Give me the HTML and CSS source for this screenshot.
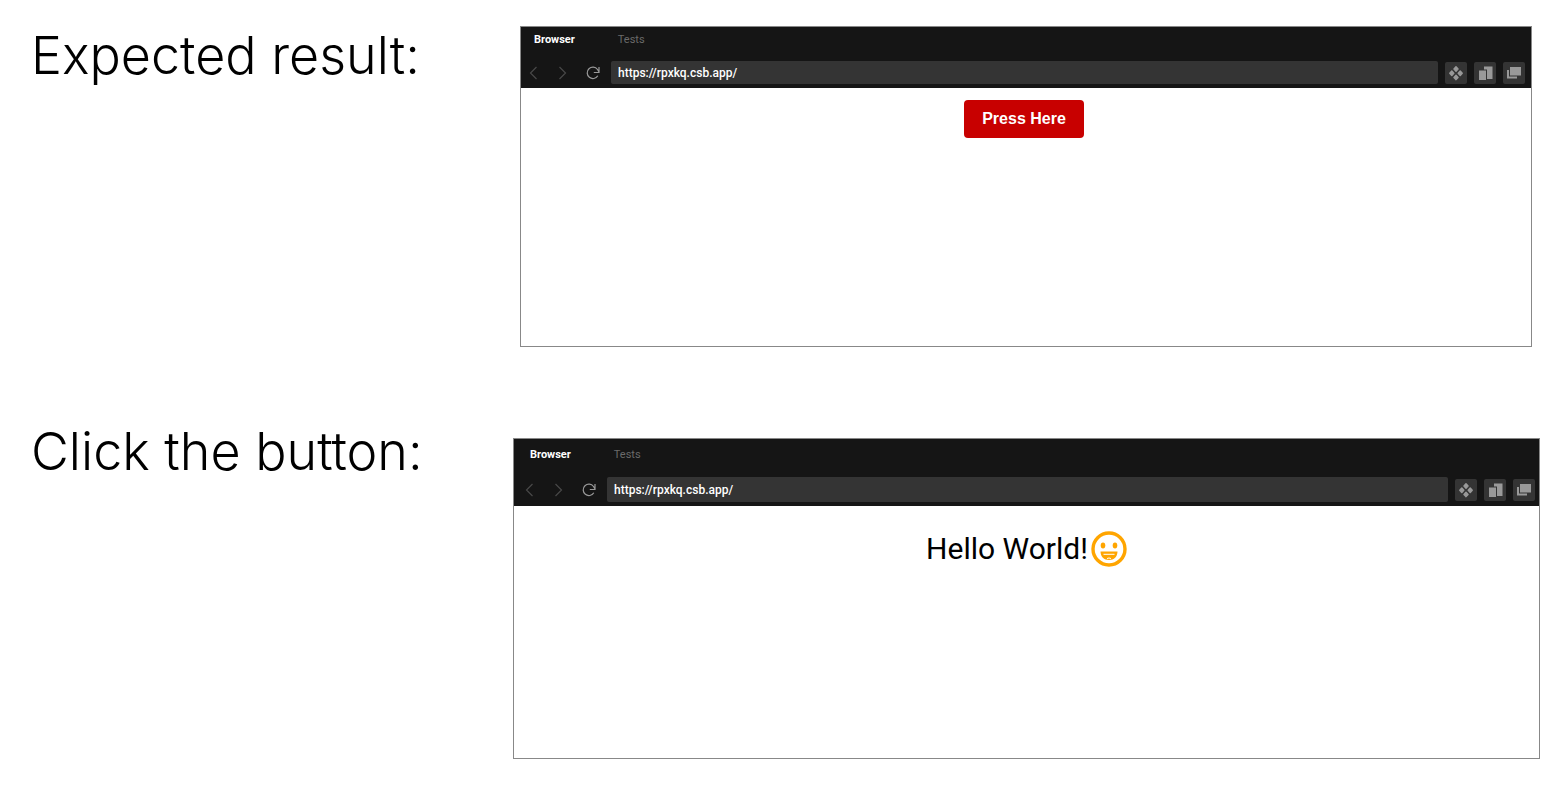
FILE: index.html
```html
<!DOCTYPE html>
<html lang="en">
<head>
<meta charset="utf-8">
<title>Expected result</title>
<link rel="stylesheet" href="styles.css">
</head>
<body>
<svg class="defs" aria-hidden="true">
  <symbol id="back" viewBox="0 0 9 14"><path d="M7.500 1 1.500 7l6 6" fill="none" stroke="currentColor" stroke-width="1.200"/></symbol>
  <symbol id="forward" viewBox="0 0 9 14"><path d="m1.500 1 6 6-6 6" fill="none" stroke="currentColor" stroke-width="1.200"/></symbol>
  <symbol id="reload" viewBox="0 0 14 14"><path d="M11.800 9.800A5.700 5.700 0 1 1 11.500 3.500L13 6M13 1v5.500H7.800" fill="none" stroke="currentColor" stroke-width="1.200"/></symbol>
  <symbol id="diamonds" viewBox="0 0 22 22"><path d="m11 4.800 2 2.200-2 2.200L9 7zM6.800 9l2 2.200-2 2.200-2-2.200zM15.200 9l2 2.200-2 2.200-2-2.200zM11 13.200l2 2.200-2 2.200-2-2.200z" fill="currentColor" stroke="currentColor" stroke-width="1.500" stroke-linejoin="round"/></symbol>
  <symbol id="devices" viewBox="0 0 22 22"><path d="M10 4.500h8.500V17H13V7.500h-3zM5 8.500h7V18H5z" fill="currentColor"/></symbol>
  <symbol id="windows" viewBox="0 0 22 22"><path d="M7 5h11v8.500H7zM4 8h2v6.500h8v2H4z" fill="currentColor"/></symbol>
</svg>
<main>
  <section class="step">
    <h2 class="caption">Expected result:</h2>
    <div class="browser">
      <header class="chrome">
        <nav class="tabs"><button class="tab active">Browser</button><button class="tab">Tests</button></nav>
        <div class="toolbar">
          <button class="nav" aria-label="Back"><svg class="chevron"><use href="#back"/></svg></button>
          <button class="nav" aria-label="Forward"><svg class="chevron"><use href="#forward"/></svg></button>
          <button class="nav reload" aria-label="Reload"><svg class="turn"><use href="#reload"/></svg></button>
          <input class="url" aria-label="Address" value="https://rpxkq.csb.app/">
          <button class="tool" aria-label="Layout"><svg><use href="#diamonds"/></svg></button>
          <button class="tool" aria-label="Responsive view"><svg><use href="#devices"/></svg></button>
          <button class="tool" aria-label="Open in new window"><svg><use href="#windows"/></svg></button>
        </div>
      </header>
      <div class="view"><button class="press">Press Here</button></div>
    </div>
  </section>
  <section class="step clicked">
    <h2 class="caption">Click the button:</h2>
    <div class="browser">
      <header class="chrome">
        <nav class="tabs"><button class="tab active">Browser</button><button class="tab">Tests</button></nav>
        <div class="toolbar">
          <button class="nav" aria-label="Back"><svg class="chevron"><use href="#back"/></svg></button>
          <button class="nav" aria-label="Forward"><svg class="chevron"><use href="#forward"/></svg></button>
          <button class="nav reload" aria-label="Reload"><svg class="turn"><use href="#reload"/></svg></button>
          <input class="url" aria-label="Address" value="https://rpxkq.csb.app/">
          <button class="tool" aria-label="Layout"><svg><use href="#diamonds"/></svg></button>
          <button class="tool" aria-label="Responsive view"><svg><use href="#devices"/></svg></button>
          <button class="tool" aria-label="Open in new window"><svg><use href="#windows"/></svg></button>
        </div>
      </header>
      <div class="view">
        <p class="hello">Hello World!<svg class="smile" viewBox="0 0 36 36" role="img" aria-label="Smiling face"><circle cx="18" cy="18" r="16" fill="none" stroke="#ffa500" stroke-width="3.400"/><ellipse cx="12" cy="14.500" rx="2.300" ry="3" fill="#ffa500"/><ellipse cx="24" cy="14.500" rx="2.300" ry="3" fill="#ffa500"/><path d="M9.500 20.500h17c0 5-3.500 8.500-8.500 8.500s-8.500-3.500-8.500-8.500z" fill="#ffa500"/><path d="M12.500 23.300h11M16 27.500q2-1 4 0" fill="none" stroke="#fff" stroke-width="1"/></svg></p>
      </div>
    </div>
  </section>
</main>
</body>
</html>
```
FILE: styles.css
```css
* { box-sizing: border-box; }
body { margin: 0; background: #fff; color: #000; font-family: Roboto, "Liberation Sans", sans-serif; }
button { margin: 0; padding: 0; border: 0; background: none; font: inherit; color: inherit; }
svg { display: block; }
.defs { position: absolute; width: 0; height: 0; }
main { display: grid; row-gap: 75px; padding: 26px 0 34px; }
.step { display: flex; align-items: flex-start; padding: 0 30px 0 31px; }
.caption { flex: 0 0 489px; margin: 0; font: 300 52px/60px Inter, sans-serif; white-space: nowrap; }
.browser { flex: 1; min-width: 0; border: 1px solid #888; }
.chrome { padding: 4px 6px 4px 8px; background: #151515; }
.tabs { display: flex; gap: 43px; padding-left: 5px; font-size: 11px; line-height: 18px; }
.tab { color: #6a6a6a; }
.tab.active { color: #fff; font-weight: 700; }
.toolbar { display: flex; align-items: center; gap: 7px; margin-top: 12px; color: #999; }
.nav { display: flex; justify-content: center; width: 22px; color: #484848; }
.nav:first-child { width: 9px; }
.nav:nth-child(2) { width: 34px; }
.nav.reload { width: 14px; margin-right: 4px; color: #999; }
.chevron { width: 9px; height: 14px; }
.turn { width: 14px; height: 14px; }
.url { flex: 1; min-width: 0; height: 23px; padding: 0 7px; border: 0; border-radius: 2px; background: #343434; color: #fff; font: 500 12px Roboto, sans-serif; }
.tool { width: 22px; height: 22px; border-radius: 2px; background: #343434; }
.tool svg { width: 22px; height: 22px; }
.view { display: flex; justify-content: center; align-items: flex-start; height: 258px; padding: 12px 4px 0 0; }
.press { padding: 0 18px; border-radius: 4px; background: #c80000; color: #fff; font: 700 16px/38px "Liberation Sans", sans-serif; }
.clicked { padding-right: 22px; }
.clicked .caption { flex-basis: 482px; }
.clicked .browser { margin-top: 16px; }
.clicked .chrome { padding: 7px 4px 4px 11px; }
.clicked .toolbar { margin-top: 13px; }
.clicked .url { height: 25px; }
.clicked .view { height: 252px; padding: 24px 0 0; }
.hello { display: flex; align-items: center; gap: 3px; margin: 0; font-size: 30px; line-height: 38px; }
.smile { width: 36px; height: 36px; }
```
